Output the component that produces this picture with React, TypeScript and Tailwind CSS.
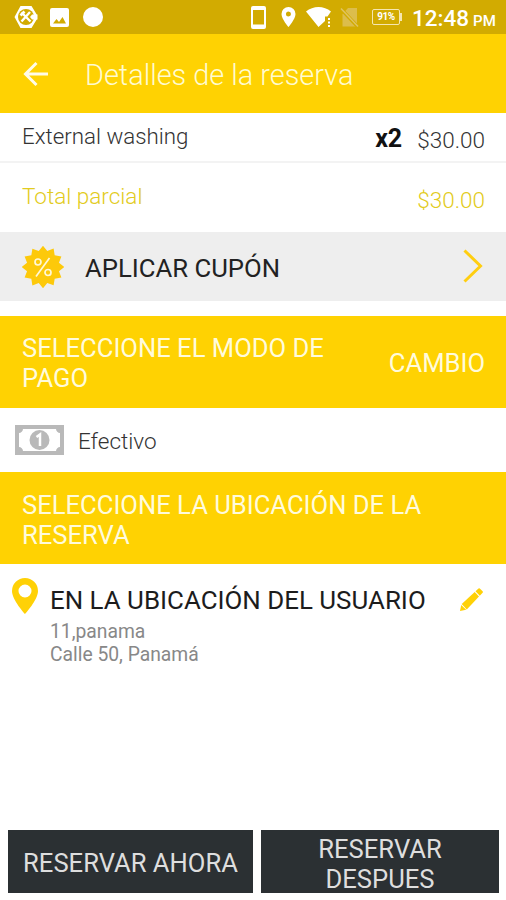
function StatusBar() {
  return (
    <div className="flex h-[34px] shrink-0 items-center bg-[#d2ab01] text-white">
      <svg className="ml-[14px]" width="24" height="24" viewBox="0 0 24 24" fill="none">
        <path d="M6.500 1h11l5.500 9h-4l-1.500 2 1.500 2h4l-5.500 9h-11L.5 12z" fill="currentColor" />
        <circle cx="12" cy="12" r="8" fill="#d2ab01" />
        <path d="M18 9.500h5.500v5H18l-2-2.500z" fill="currentColor" />
        <path d="M7.500 7.500l9 9M16 7l-8.500 9.500" stroke="currentColor" strokeWidth="2.400" />
        <path d="M6.500 10.500l4-4" stroke="currentColor" strokeWidth="2.600" />
      </svg>
      <svg className="ml-[12px]" width="19" height="19" viewBox="0 0 19 19">
        <rect width="19" height="19" rx="2" fill="currentColor" />
        <path d="M3 15.500l3.500-4.500L9 14l3.500-5L16 15.500z" fill="#d2ab01" />
      </svg>
      <span className="ml-[14px] size-[20px] rounded-full bg-white" />

      <svg className="ml-[148px]" width="15" height="23" viewBox="0 0 15 23">
        <path
          d="M2 0h11a2 2 0 012 2v19a2 2 0 01-2 2H2a2 2 0 01-2-2V2a2 2 0 012-2zm0 4v14.500h11V4z"
          fill="currentColor"
          fillRule="evenodd"
        />
      </svg>
      <svg className="ml-[15px]" width="15" height="20" viewBox="0 0 14 20">
        <path
          d="M7 0a7 7 0 017 7c0 5-7 13-7 13S0 12 0 7a7 7 0 017-7zm0 4.500a2.500 2.500 0 100 5 2.500 2.500 0 000-5z"
          fill="currentColor"
          fillRule="evenodd"
        />
      </svg>
      <svg className="ml-[10px]" width="26" height="21" viewBox="0 0 26 21" fill="currentColor">
        <path d="M0 4.500C7-1.500 18-1.500 25 4.500l-3.500 5h-2.500v4.500L12.500 20z" />
        <path d="M22 11h2v2h-2zM22 14.500h2v2h-2zM22 18h2v2h-2z" />
      </svg>
      <svg className="ml-[8px]" width="20" height="21" viewBox="0 0 20 21">
        <path d="M8 1h9v18.500H2.500V7z" fill="#dcbd4c" />
        <path d="M1 2l17 18" stroke="#d2ab01" strokeWidth="3.500" />
        <path d="M1 1.500l17 18" stroke="#dfc462" strokeWidth="1.500" />
      </svg>
      <div className="ml-[12px] flex h-[16px] w-[28px] items-center justify-center rounded-[2px] border border-[#f5e6b0] text-[10px] font-bold leading-none tracking-[-0.5px]">
        91%
      </div>
      <span className="h-[8px] w-[2px] bg-[#f5e6b0]" />
      <div className="ml-[10px] mt-[3px] flex items-baseline whitespace-nowrap font-medium leading-none">
        <span className="text-[22.5px]">12:48</span>
        <span className="ml-[4px] text-[15px]">PM</span>
      </div>
    </div>
  );
}

function AppBar() {
  return (
    <header className="flex h-[79px] shrink-0 items-center bg-[#ffd202] text-[#fffbd0]">
      <svg className="ml-[23px]" width="26" height="26" viewBox="0 0 26 26" fill="none">
        <path
          d="M25 13H3M13.500 2L2.500 13l11 11"
          stroke="#fffbe8"
          strokeWidth="3"
        />
      </svg>
      <h1 className="ml-[36px] mt-[2px] whitespace-nowrap text-[28.9px] font-light leading-8">
        Detalles de la reserva
      </h1>
    </header>
  );
}

function CouponIcon() {
  return (
    <svg width="42" height="42" viewBox="-21 -21 42 42">
      <path
        d="M0-16.500L5.500-20.500 8.250-14.300 15-15 14.300-8.250 20.500-5.500 16.500 0 20.500 5.500 14.300 8.250 15 15 8.250 14.300 5.500 20.500 0 16.500-5.500 20.500-8.250 14.300-15 15-14.300 8.250-20.500 5.500-16.500 0-20.500-5.500-14.300-8.250-15-15-8.250-14.300-5.500-20.500z"
        fill="#fdc90a"
        transform="rotate(15)"
      />
      <g fill="none" stroke="#fff8d8" strokeWidth="1.700">
        <circle cx="-5" cy="-5" r="3" />
        <circle cx="5" cy="5.500" r="3" />
        <path d="M6.500-9L-7 9.500" />
      </g>
    </svg>
  );
}

function CashIcon() {
  return (
    <svg width="49" height="30" viewBox="0 0 49 30">
      <rect width="49" height="30" fill="#b9b9b9" />
      <path d="M8 4h33c0 2 2 4 4 4v14c-2 0-4 2-4 4H8c0-2-2-4-4-4V8c2 0 4-2 4-4z" fill="#fff" />
      <circle cx="24.500" cy="15" r="10" fill="#b9b9b9" />
      <path d="M21.500 12l3.500-2.500V21" fill="none" stroke="#fff" strokeWidth="2.500" />
    </svg>
  );
}

export default function App() {
  return (
    <div className="flex h-[900px] w-[506px] flex-col overflow-hidden bg-white font-[Roboto,sans-serif] text-[#222]">
      <StatusBar />
      <AppBar />

      <div className="flex h-[50px] shrink-0 items-start border-b-2 border-[#f3f3f3] pl-[22px] pr-[21px] text-[22.5px] font-light leading-7">
        <span className="mt-[9px] whitespace-nowrap text-[22.3px] text-[#333]">External washing</span>
        <span className="ml-auto mt-[12px] text-[25px] font-bold text-[#111]">x2</span>
        <span className="ml-[15px] mt-[13px] text-[#333]">$30.00</span>
      </div>

      <div className="flex h-[69px] shrink-0 items-start justify-between pl-[22px] pr-[21px] text-[22.5px] font-light leading-7 text-[#e2cb20]">
        <span className="mt-[19px] whitespace-nowrap">Total parcial</span>
        <span className="mt-[23px]">$30.00</span>
      </div>

      <div className="flex h-[69px] shrink-0 items-center bg-[#eee] pl-[22px] pr-[23px]">
        <CouponIcon />
        <span className="ml-[21px] mt-[2px] text-[25.7px] leading-[30px]">APLICAR CUPÓN</span>
        <svg className="ml-auto mb-[2px]" width="20" height="34" viewBox="0 0 20 34" fill="none">
          <path d="M1.500 1.500L17.500 17l-16 15.500" stroke="#ffce10" strokeWidth="3" />
        </svg>
      </div>

      <div className="mt-[15px] flex h-[92px] shrink-0 items-center justify-between bg-[#ffd202] pl-[22px] pr-[21px] text-[25.6px] leading-[30px] text-[#fffbdc]">
        <h2 className="mt-[2px] w-[320px]">
          SELECCIONE EL MODO DE
          <br />
          PAGO
        </h2>
        <span className="mt-[2px]">CAMBIO</span>
      </div>

      <div className="flex h-[64px] shrink-0 items-center pl-[15px]">
        <CashIcon />
        <span className="ml-[14px] mt-[2px] text-[22.5px] font-light leading-7 text-[#333]">Efectivo</span>
      </div>

      <div className="flex h-[92px] shrink-0 items-center bg-[#ffd202] pl-[22px] text-[25.6px] leading-[30px] text-[#fffbdc]">
        <h2 className="mt-[3px] whitespace-nowrap">
          SELECCIONE LA UBICACIÓN DE LA
          <br />
          RESERVA
        </h2>
      </div>

      <div className="flex items-start pl-[12px] pr-[23px] pt-[14px]">
        <svg width="26" height="36" viewBox="0 0 26 36">
          <path
            d="M13 0a13 13 0 0113 13c0 9-13 23-13 23S0 22 0 13A13 13 0 0113 0zm0 6.500a6.500 6.500 0 100 13 6.500 6.500 0 000-13z"
            fill="#ffd106"
            fillRule="evenodd"
          />
        </svg>
        <div className="ml-[12px] mt-[7px] whitespace-nowrap">
          <p className="text-[25.9px] leading-[30px] text-[#1c1c1c]">EN LA UBICACIÓN DEL USUARIO</p>
          <p className="mt-[5px] text-[19.3px] leading-[23px] text-[#888]">
            11,panama
            <br />
            Calle 50, Panamá
          </p>
        </div>
        <svg className="ml-auto mt-[10px]" width="23" height="23" viewBox="0 0 23 23" fill="#ffd106">
          <path d="M0 23l1.200-6 5 4.700z" />
          <path d="M1.700 16L14.700 4l4.300 4.500L6.800 21.500z" />
          <path d="M15.500 3.300L18.500.5q.6-.6 1.300 0L22.600 3.300q.6.700 0 1.500L19.800 7.700z" />
        </svg>
      </div>

      <div className="mb-[7px] ml-[8px] mr-[7px] mt-auto flex h-[63px] shrink-0 gap-[8px] text-center text-[25.6px] leading-[30px] text-[#dedede]">
        <button className="flex w-[245px] items-center justify-center bg-[#2b3033] pt-[3px]">
          RESERVAR AHORA
        </button>
        <button className="flex w-[238px] items-center justify-center bg-[#2b3033] pt-[5px]">
          RESERVAR
          <br />
          DESPUES
        </button>
      </div>
    </div>
  );
}
